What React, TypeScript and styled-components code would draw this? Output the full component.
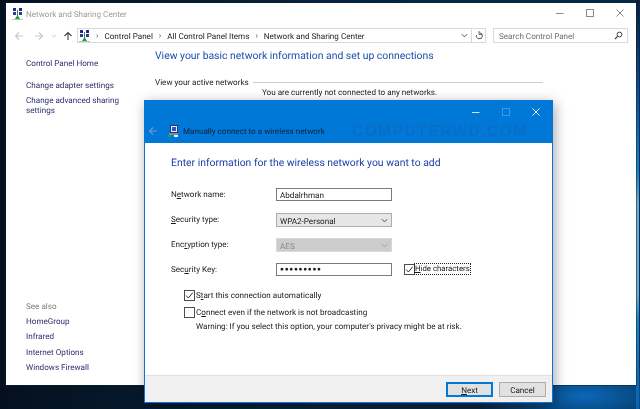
import React from "react";
import styled, { createGlobalStyle } from "styled-components";

const Global = createGlobalStyle`
  html, body { margin: 0; padding: 0; width: 640px; height: 409px; overflow: hidden; }
  * { box-sizing: border-box; }
  body { font-family: Roboto, "Open Sans", sans-serif; color: #1a1a1a; text-rendering: geometricPrecision; }
`;

const Desktop = styled.div`
  position: relative;
  width: 640px;
  height: 409px;
  overflow: hidden;
  filter: blur(0.3px);
  background:
    linear-gradient(180deg, #0a1e36 0, #0a4f96 22%, #1584cc 42%, #6aaecd 50%, #6aaecd 72%, #1584cc 78%, #0a62b0 100%) 636px 0 / 3px 100% no-repeat,
    radial-gradient(ellipse 110px 34px at 585px 396px, #0b68b8 0%, rgba(11, 104, 184, 0) 100%),
    linear-gradient(90deg, #04101e 0%, #06243e 50%, #06294a 100%);
`;

const MainWindow = styled.div`
  position: absolute;
  left: 6px;
  top: 3px;
  width: 630px;
  height: 382px;
  background: #fff;
  display: flex;
  flex-direction: column;
  box-shadow: 0 0 0 1px rgba(10, 30, 50, 0.5);
`;

const TitleBar = styled.div`
  height: 21px;
  display: flex;
  align-items: center;
  padding: 0 11px 0 6px;
  gap: 3px;
  font-size: 8.1px;
  color: #9a9a9a;
`;

const TitleText = styled.span`
  flex: 1;
  white-space: nowrap;
`;

const WinButtons = styled.div`
  display: flex;
  align-items: center;
  gap: 20px;
  margin-top: -2px;
`;

const Toolbar = styled.div`
  height: 19px;
  margin-top: 2px;
  display: flex;
  align-items: center;
  padding-left: 8px;
  padding-right: 8px;
`;

const NavGroup = styled.div`
  width: 63px;
  display: flex;
  align-items: center;
`;

const NavGap = styled.span<{ $w: number }>`
  width: ${(p) => p.$w}px;
  flex: none;
`;

const AddressBox = styled.div`
  width: 409px;
  height: 15px;
  border: 1px solid #d9d9d9;
  display: flex;
  align-items: center;
  font-size: 8.1px;
  color: #222;
  white-space: nowrap;
`;

const Crumbs = styled.div`
  flex: 1;
  display: flex;
  align-items: center;
  padding-left: 1px;
  gap: 6px;
`;

const Sep = styled.span`
  color: #555;
  font-size: 8px;
  line-height: 1;
`;

const AddrButton = styled.div`
  width: 14px;
  height: 13px;
  display: flex;
  align-items: center;
  justify-content: center;
  border-left: 1px solid #d9d9d9;
`;

const DropBtn = styled.div`
  width: 13px;
  display: flex;
  align-items: center;
  justify-content: center;
`;

const SearchBox = styled.div`
  width: 135px;
  height: 15px;
  margin-left: 7px;
  border: 1px solid #d9d9d9;
  display: flex;
  align-items: center;
  justify-content: space-between;
  padding: 0 4px 0 5px;
  font-size: 8.1px;
  color: #6f6f6f;
  white-space: nowrap;
`;

const Body = styled.div`
  flex: 1;
  display: flex;
  min-height: 0;
`;

const Side = styled.div`
  width: 149px;
  padding: 13px 0 13px 20px;
  display: flex;
  flex-direction: column;
  font-size: 8.1px;
  color: #2d2d70;
`;

const SideLink = styled.div<{ $gap?: number }>`
  line-height: 10px;
  margin-top: ${(p) => p.$gap ?? 0}px;
`;

const SeeAlso = styled.div`
  margin-top: auto;
  color: #7d7d7d;
  line-height: 11px;
  margin-bottom: 4px;
`;

const Main = styled.div`
  flex: 1;
  padding-top: 3px;
`;

const Heading = styled.div`
  font-size: 10.4px;
  line-height: 16px;
  color: #1a4fb0;
  white-space: nowrap;
`;

const ActiveRow = styled.div`
  display: flex;
  align-items: center;
  gap: 4px;
  margin-top: 13px;
  width: 388px;
  font-size: 8.1px;
  line-height: 10px;
  white-space: nowrap;
`;

const Rule = styled.div`
  flex: 1;
  height: 1px;
  background: #cfcfcf;
`;

const NotConnected = styled.div`
  font-size: 8.1px;
  line-height: 10px;
  padding-left: 107px;
  white-space: nowrap;
`;

const Dialog = styled.div`
  position: absolute;
  left: 144px;
  top: 100px;
  width: 409px;
  height: 303px;
  background: #fff;
  border: 1px solid #0a74d8;
  box-shadow: 2px 3px 12px rgba(0, 0, 0, 0.35);
  display: flex;
  flex-direction: column;
`;

const DialogHeader = styled.div`
  position: relative;
  height: 42px;
  background: #0078d7;
  flex: none;
`;

const HeaderControls = styled.div`
  display: flex;
  justify-content: flex-end;
  align-items: center;
  gap: 20px;
  height: 20px;
  padding: 1px 11px 0 0;
`;

const HeaderTitleRow = styled.div`
  display: flex;
  align-items: center;
  padding-left: 3px;
  gap: 4px;
  margin-top: 4px;
  font-size: 8.1px;
  color: #10203a;
  white-space: nowrap;
`;

const Watermark = styled.div`
  position: absolute;
  left: 207px;
  top: 24px;
  font-family: "Liberation Sans", sans-serif;
  font-weight: 700;
  font-size: 15.5px;
  line-height: 14px;
  letter-spacing: 1.5px;
  color: #0a6dc6;
  white-space: nowrap;
`;

const DialogBody = styled.div`
  flex: 1;
  padding: 12px 0 0 26px;
  display: flex;
  flex-direction: column;
`;

const DialogHeading = styled.div`
  font-size: 10.4px;
  line-height: 16px;
  color: #1a3fa8;
  white-space: nowrap;
`;

const FormGrid = styled.div`
  display: grid;
  grid-template-columns: 105px 116px auto;
  grid-auto-rows: 14px;
  row-gap: 11px;
  margin-top: 16px;
  align-items: center;
  font-size: 8.1px;
`;

const Label = styled.div`
  white-space: nowrap;
`;

const TextInput = styled.div`
  height: 13px;
  border: 1px solid #7a7a7a;
  display: flex;
  align-items: center;
  padding: 1px 0 0 3px;
  font-size: 8.1px;
  background: #fff;
  white-space: nowrap;
`;

const Dots = styled.span`
  font-size: 6.5px;
  letter-spacing: 0.7px;
  line-height: 1;
`;

const SelectBox = styled.div<{ $disabled?: boolean }>`
  height: 14px;
  margin-top: 2px;
  display: flex;
  align-items: center;
  justify-content: space-between;
  padding: 1px 3px 0;
  border: 1px solid ${(p) => (p.$disabled ? "#d9d9d9" : "#acacac")};
  background: ${(p) => (p.$disabled ? "#cccccc" : "#e6e6e6")};
  color: ${(p) => (p.$disabled ? "#8a8a8a" : "#1a1a1a")};
  font-size: 8.1px;
`;

const HideWrap = styled.div`
  display: flex;
  align-items: center;
  gap: 0;
  margin-left: 12px;
  white-space: nowrap;
`;

const Box = styled.div`
  width: 11px;
  height: 11px;
  border: 1px solid #4d4d4d;
  background: #fff;
  display: flex;
  align-items: center;
  justify-content: center;
  flex: none;
`;

const Focus = styled.span`
  outline: 1px dotted #222;
  line-height: 10px;
  font-size: 7.8px;
`;

const Options = styled.div`
  margin-top: 14px;
  padding-left: 13px;
  font-size: 8.1px;
  display: flex;
  flex-direction: column;
`;

const OptionRow = styled.div<{ $gap?: number }>`
  display: flex;
  align-items: center;
  gap: 1px;
  margin-top: ${(p) => p.$gap ?? 0}px;
  line-height: 11px;
  white-space: nowrap;
`;

const Warning = styled.div`
  padding-left: 12px;
  margin-top: 3px;
  line-height: 11px;
  white-space: nowrap;
`;

const Footer = styled.div`
  height: 27px;
  flex: none;
  background: #f0f0f0;
  border-top: 1px solid #dfdfdf;
  display: flex;
  align-items: flex-start;
  justify-content: flex-end;
  gap: 6px;
  padding: 6px 6px 0 0;
`;

const Button = styled.div<{ $primary?: boolean }>`
  width: 47px;
  height: 15px;
  background: #e1e1e1;
  border: ${(p) => (p.$primary ? "2px solid #0078d7" : "1px solid #adadad")};
  font-size: 8.1px;
  display: flex;
  align-items: center;
  justify-content: center;
`;

const U = styled.span`
  text-decoration: underline;
`;

const NetIcon = () => (
  <svg width="11" height="12" viewBox="0 0 11 12">
    <rect x="1" y="0" width="3" height="3" fill="#1e2f7a" />
    <rect x="7" y="0" width="3" height="3" fill="#1e2f7a" />
    <rect x="1" y="4" width="3" height="3" fill="#2a3f90" />
    <rect x="7" y="4" width="3" height="3" fill="#2a3f90" />
    <rect x="5" y="2" width="1" height="6" fill="#5a6a9a" />
    <path d="M5.5 7 L8 11 H3 Z" fill="#18a035" />
    <rect x="0" y="11" width="11" height="1" fill="#b8c8b8" />
  </svg>
);

const WifiIcon = () => (
  <svg width="11" height="12" viewBox="0 0 11 12" style={{ flex: "none" }}>
    <rect x="2.5" y="0.5" width="7" height="7" fill="#e8eef8" stroke="#22357a" />
    <rect x="4" y="2" width="4" height="4" fill="#3355bb" />
    <rect x="1" y="8" width="9" height="2" fill="#7a8aa8" />
    <rect x="0" y="10" width="4" height="2" fill="#1aa23a" />
    <rect x="6" y="10" width="4" height="2" fill="#e8eef8" />
  </svg>
);

const Arrow = ({ dir, color }: { dir: "l" | "r" | "u"; color: string }) => {
  const rot = dir === "l" ? 0 : dir === "r" ? 180 : 90;
  return (
    <svg width="10" height="10" viewBox="0 0 10 10" style={{ transform: `rotate(${rot}deg)`, flex: "none" }}>
      <path d="M9 5H1.5M5 1.5L1.5 5L5 8.5" fill="none" stroke={color} strokeWidth="1.1" />
    </svg>
  );
};

const Chevron = ({ color = "#555", size = 7 }: { color?: string; size?: number }) => (
  <svg width={size} height={size} viewBox="0 0 7 7" style={{ flex: "none" }}>
    <path d="M0.8 2.2L3.5 4.9L6.2 2.2" fill="none" stroke={color} strokeWidth="1" />
  </svg>
);

const Refresh = () => (
  <svg width="8" height="9" viewBox="0 0 8 9">
    <path d="M4.5 1.8A3 3 0 1 1 1.5 4" fill="none" stroke="#555" strokeWidth="1" />
    <path d="M4 0V3.5H6.5" fill="none" stroke="#555" strokeWidth="0.9" />
  </svg>
);

const Search = () => (
  <svg width="9" height="9" viewBox="0 0 9 9">
    <circle cx="5.5" cy="3.5" r="2.4" fill="none" stroke="#444" strokeWidth="1" />
    <path d="M3.6 5.4L1 8" stroke="#444" strokeWidth="1.3" />
  </svg>
);

const Tick = () => (
  <svg width="9" height="9" viewBox="0 0 9 9">
    <path d="M1.2 4.6L3.4 7L7.8 1.6" fill="none" stroke="#333" strokeWidth="1" />
  </svg>
);

const Minimize = ({ color }: { color: string }) => (
  <svg width="10" height="10" viewBox="0 0 10 10">
    <path d="M1 5.5H8.5" stroke={color} strokeWidth="1" />
  </svg>
);

const Maximize = ({ color }: { color: string }) => (
  <svg width="10" height="10" viewBox="0 0 10 10">
    <rect x="1.5" y="1.5" width="7" height="7" fill="none" stroke={color} strokeWidth="1" />
  </svg>
);

const Close = ({ color }: { color: string }) => (
  <svg width="10" height="10" viewBox="0 0 10 10">
    <path d="M1.5 1.5L8.5 8.5M8.5 1.5L1.5 8.5" stroke={color} strokeWidth="1" />
  </svg>
);

export default function App() {
  return (
    <Desktop>
      <Global />
      <MainWindow>
        <TitleBar>
          <NetIcon />
          <TitleText>Network and Sharing Center</TitleText>
          <WinButtons>
            <Minimize color="#8a8a8a" />
            <Maximize color="#8a8a8a" />
            <Close color="#8a8a8a" />
          </WinButtons>
        </TitleBar>
        <Toolbar>
          <NavGroup>
            <Arrow dir="l" color="#c8c8c8" />
            <NavGap $w={10} />
            <Arrow dir="r" color="#c8c8c8" />
            <NavGap $w={7} />
            <Chevron color="#c8c8c8" size={6} />
            <NavGap $w={6} />
            <Arrow dir="u" color="#444" />
          </NavGroup>
          <AddressBox>
            <Crumbs>
              <NetIcon />
              <Sep>›</Sep>
              <span>Control Panel</span>
              <Sep>›</Sep>
              <span>All Control Panel Items</span>
              <Sep>›</Sep>
              <span>Network and Sharing Center</span>
            </Crumbs>
            <DropBtn>
              <Chevron />
            </DropBtn>
            <AddrButton>
              <Refresh />
            </AddrButton>
          </AddressBox>
          <SearchBox>
            <span>Search Control Panel</span>
            <Search />
          </SearchBox>
        </Toolbar>
        <Body>
          <Side>
            <SideLink>Control Panel Home</SideLink>
            <SideLink $gap={12}>Change adapter settings</SideLink>
            <SideLink $gap={5}>
              Change advanced sharing
              <br />
              settings
            </SideLink>
            <SeeAlso>See also</SeeAlso>
            <SideLink>HomeGroup</SideLink>
            <SideLink $gap={5.3}>Infrared</SideLink>
            <SideLink $gap={5.3}>Internet Options</SideLink>
            <SideLink $gap={5.3}>Windows Firewall</SideLink>
          </Side>
          <Main>
            <Heading>View your basic network information and set up connections</Heading>
            <ActiveRow>
              <span>View your active networks</span>
              <Rule />
            </ActiveRow>
            <NotConnected>You are currently not connected to any networks.</NotConnected>
          </Main>
        </Body>
      </MainWindow>
      <Dialog>
        <DialogHeader>
          <HeaderControls>
            <Minimize color="#cfe4f7" />
            <Maximize color="#3e97e0" />
            <Close color="#ffffff" />
          </HeaderControls>
          <HeaderTitleRow>
            <Arrow dir="l" color="#6f9cc4" />
            <NavGap $w={2} />
            <WifiIcon />
            <span>Manually connect to a wireless network</span>
          </HeaderTitleRow>
          <Watermark>COMPUTERWD.COM</Watermark>
        </DialogHeader>
        <DialogBody>
          <DialogHeading>Enter information for the wireless network you want to add</DialogHeading>
          <FormGrid>
            <Label>N<U>e</U>twork name:</Label>
            <TextInput>Abdalrhman</TextInput>
            <span />
            <Label><U>S</U>ecurity type:</Label>
            <SelectBox>
              WPA2-Personal
              <Chevron />
            </SelectBox>
            <span />
            <Label>Enc<U>r</U>yption type:</Label>
            <SelectBox $disabled>
              AES
              <Chevron color="#a0a0a0" />
            </SelectBox>
            <span />
            <Label>Sec<U>u</U>rity Key:</Label>
            <TextInput>
              <Dots>●●●●●●●●●</Dots>
            </TextInput>
            <HideWrap>
              <Box>
                <Tick />
              </Box>
              <Focus><U>H</U>ide characters</Focus>
            </HideWrap>
          </FormGrid>
          <Options>
            <OptionRow>
              <Box>
                <Tick />
              </Box>
              <span>S<U>t</U>art this connection automatically</span>
            </OptionRow>
            <OptionRow $gap={6}>
              <Box />
              <span>C<U>o</U>nnect even if the network is not broadcasting</span>
            </OptionRow>
            <Warning>Warning: If you select this option, your computer's privacy might be at risk.</Warning>
          </Options>
        </DialogBody>
        <Footer>
          <Button $primary><U>N</U>ext</Button>
          <Button>Cancel</Button>
        </Footer>
      </Dialog>
    </Desktop>
  );
}
